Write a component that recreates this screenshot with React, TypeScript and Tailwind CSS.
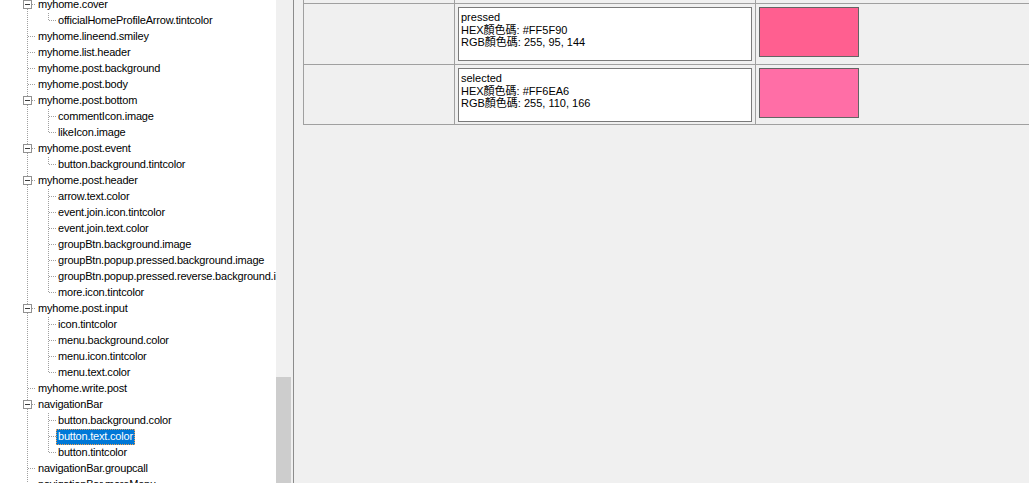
import React from "react";

type Node = { label: string; level: 0 | 1; expanded?: boolean; last?: boolean; selected?: boolean };

const nodes: Node[] = [
  { label: "myhome.cover", level: 0, expanded: true },
  { label: "officialHomeProfileArrow.tintcolor", level: 1, last: true },
  { label: "myhome.lineend.smiley", level: 0 },
  { label: "myhome.list.header", level: 0 },
  { label: "myhome.post.background", level: 0 },
  { label: "myhome.post.body", level: 0 },
  { label: "myhome.post.bottom", level: 0, expanded: true },
  { label: "commentIcon.image", level: 1 },
  { label: "likeIcon.image", level: 1, last: true },
  { label: "myhome.post.event", level: 0, expanded: true },
  { label: "button.background.tintcolor", level: 1, last: true },
  { label: "myhome.post.header", level: 0, expanded: true },
  { label: "arrow.text.color", level: 1 },
  { label: "event.join.icon.tintcolor", level: 1 },
  { label: "event.join.text.color", level: 1 },
  { label: "groupBtn.background.image", level: 1 },
  { label: "groupBtn.popup.pressed.background.image", level: 1 },
  { label: "groupBtn.popup.pressed.reverse.background.image", level: 1 },
  { label: "more.icon.tintcolor", level: 1, last: true },
  { label: "myhome.post.input", level: 0, expanded: true },
  { label: "icon.tintcolor", level: 1 },
  { label: "menu.background.color", level: 1 },
  { label: "menu.icon.tintcolor", level: 1 },
  { label: "menu.text.color", level: 1, last: true },
  { label: "myhome.write.post", level: 0 },
  { label: "navigationBar", level: 0, expanded: true },
  { label: "button.background.color", level: 1 },
  { label: "button.text.color", level: 1, selected: true },
  { label: "button.tintcolor", level: 1, last: true },
  { label: "navigationBar.groupcall", level: 0 },
  { label: "navigationBar.moreMenu", level: 0 },
];

const DOT = "#a0a0a0";

// connector lines + expand box for one row
function Gutter({ n }: { n: Node }) {
  const w = n.level === 0 ? 36 : 56;
  return (
    <svg width={w} height={16} className="shrink-0">
      <line x1={27.5} y1={0} x2={27.5} y2={16} stroke={DOT} strokeDasharray="1 1" />
      {n.level === 0 && (
        <line x1={n.expanded ? 32 : 28} y1={7.5} x2={36} y2={7.5} stroke={DOT} strokeDasharray="1 1" />
      )}
      {n.level === 0 && n.expanded && (
        <g>
          <rect x={23.5} y={3.5} width={8} height={8} fill="#fff" stroke="#919191" />
          <line x1={25} y1={7.5} x2={30} y2={7.5} stroke="#3c3c3c" />
        </g>
      )}
      {n.level === 1 && (
        <g>
          <line x1={48.5} y1={0} x2={48.5} y2={n.last ? 8 : 16} stroke={DOT} strokeDasharray="1 1" />
          <line x1={49} y1={7.5} x2={56} y2={7.5} stroke={DOT} strokeDasharray="1 1" />
        </g>
      )}
    </svg>
  );
}

function Row({ n }: { n: Node }) {
  return (
    <div className="flex h-[16px] items-start">
      <Gutter n={n} />
      <span
        className={
          n.selected
            ? "h-[16px] whitespace-nowrap border border-dotted border-[#f0a050] bg-[#0078d7] px-px leading-[12px] text-white"
            : "h-[16px] whitespace-nowrap px-[2px] leading-[14px] text-black"
        }
      >
        {n.label}
      </span>
    </div>
  );
}

type Entry = { state: string; hex: string; rgb: string; h: string };

const entries: Entry[] = [
  { state: "pressed", hex: "#FF5F90", rgb: "255, 95, 144", h: "h-[61px]" },
  { state: "selected", hex: "#FF6EA6", rgb: "255, 110, 166", h: "h-[60px]" },
];

export default function App() {
  return (
    <div
      className="flex h-[483px] w-[1029px] overflow-hidden bg-[#f0f0f0] text-[11px]"
      style={{ fontFamily: '"Liberation Sans", "Noto Sans CJK TC", sans-serif' }}
    >
      {/* tree */}
      <div className="w-[276px] shrink-0 overflow-hidden bg-white tracking-[-0.2px]">
        <div className="mt-[-3px]">
          {nodes.map((n, i) => (
            <Row key={i} n={n} />
          ))}
        </div>
      </div>

      {/* scrollbar */}
      <div className="flex w-[17px] shrink-0 flex-col bg-[#f0f0f0]">
        <div className="flex-1" />
        <div className="h-[106px] w-[15px] bg-[#cdcdcd]" />
      </div>
      <div className="w-px shrink-0 bg-[#8c8c8c]" />

      {/* property table */}
      <div className="flex-1 overflow-hidden pl-[9px]">
        <div className="grid grid-cols-[151px_301px_1fr] border-l border-[#a0a0a0]">
          <div className="h-[4px] border-r border-b border-[#a0a0a0]" />
          <div className="h-[4px] border-r border-b border-[#a0a0a0]" />
          <div className="h-[4px] border-b border-[#a0a0a0]" />
          {entries.map((e) => (
            <React.Fragment key={e.state}>
              <div className={`${e.h} border-r border-b border-[#a0a0a0]`} />
              <div className={`${e.h} border-r border-b border-[#a0a0a0] pt-[3px] pl-[3px]`}>
                <div className="h-[54px] w-[294px] border border-[#7a7a7a] bg-white px-[2px] pt-[3px] leading-[12.5px] text-black">
                  <div>{e.state}</div>
                  <div>HEX顏色碼: {e.hex}</div>
                  <div>RGB顏色碼: {e.rgb}</div>
                </div>
              </div>
              <div className={`${e.h} border-b border-[#a0a0a0] pt-[3px] pl-[3px]`}>
                <div className="h-[50px] w-[100px] border border-[#646464]" style={{ background: e.hex }} />
              </div>
            </React.Fragment>
          ))}
        </div>
      </div>
    </div>
  );
}
